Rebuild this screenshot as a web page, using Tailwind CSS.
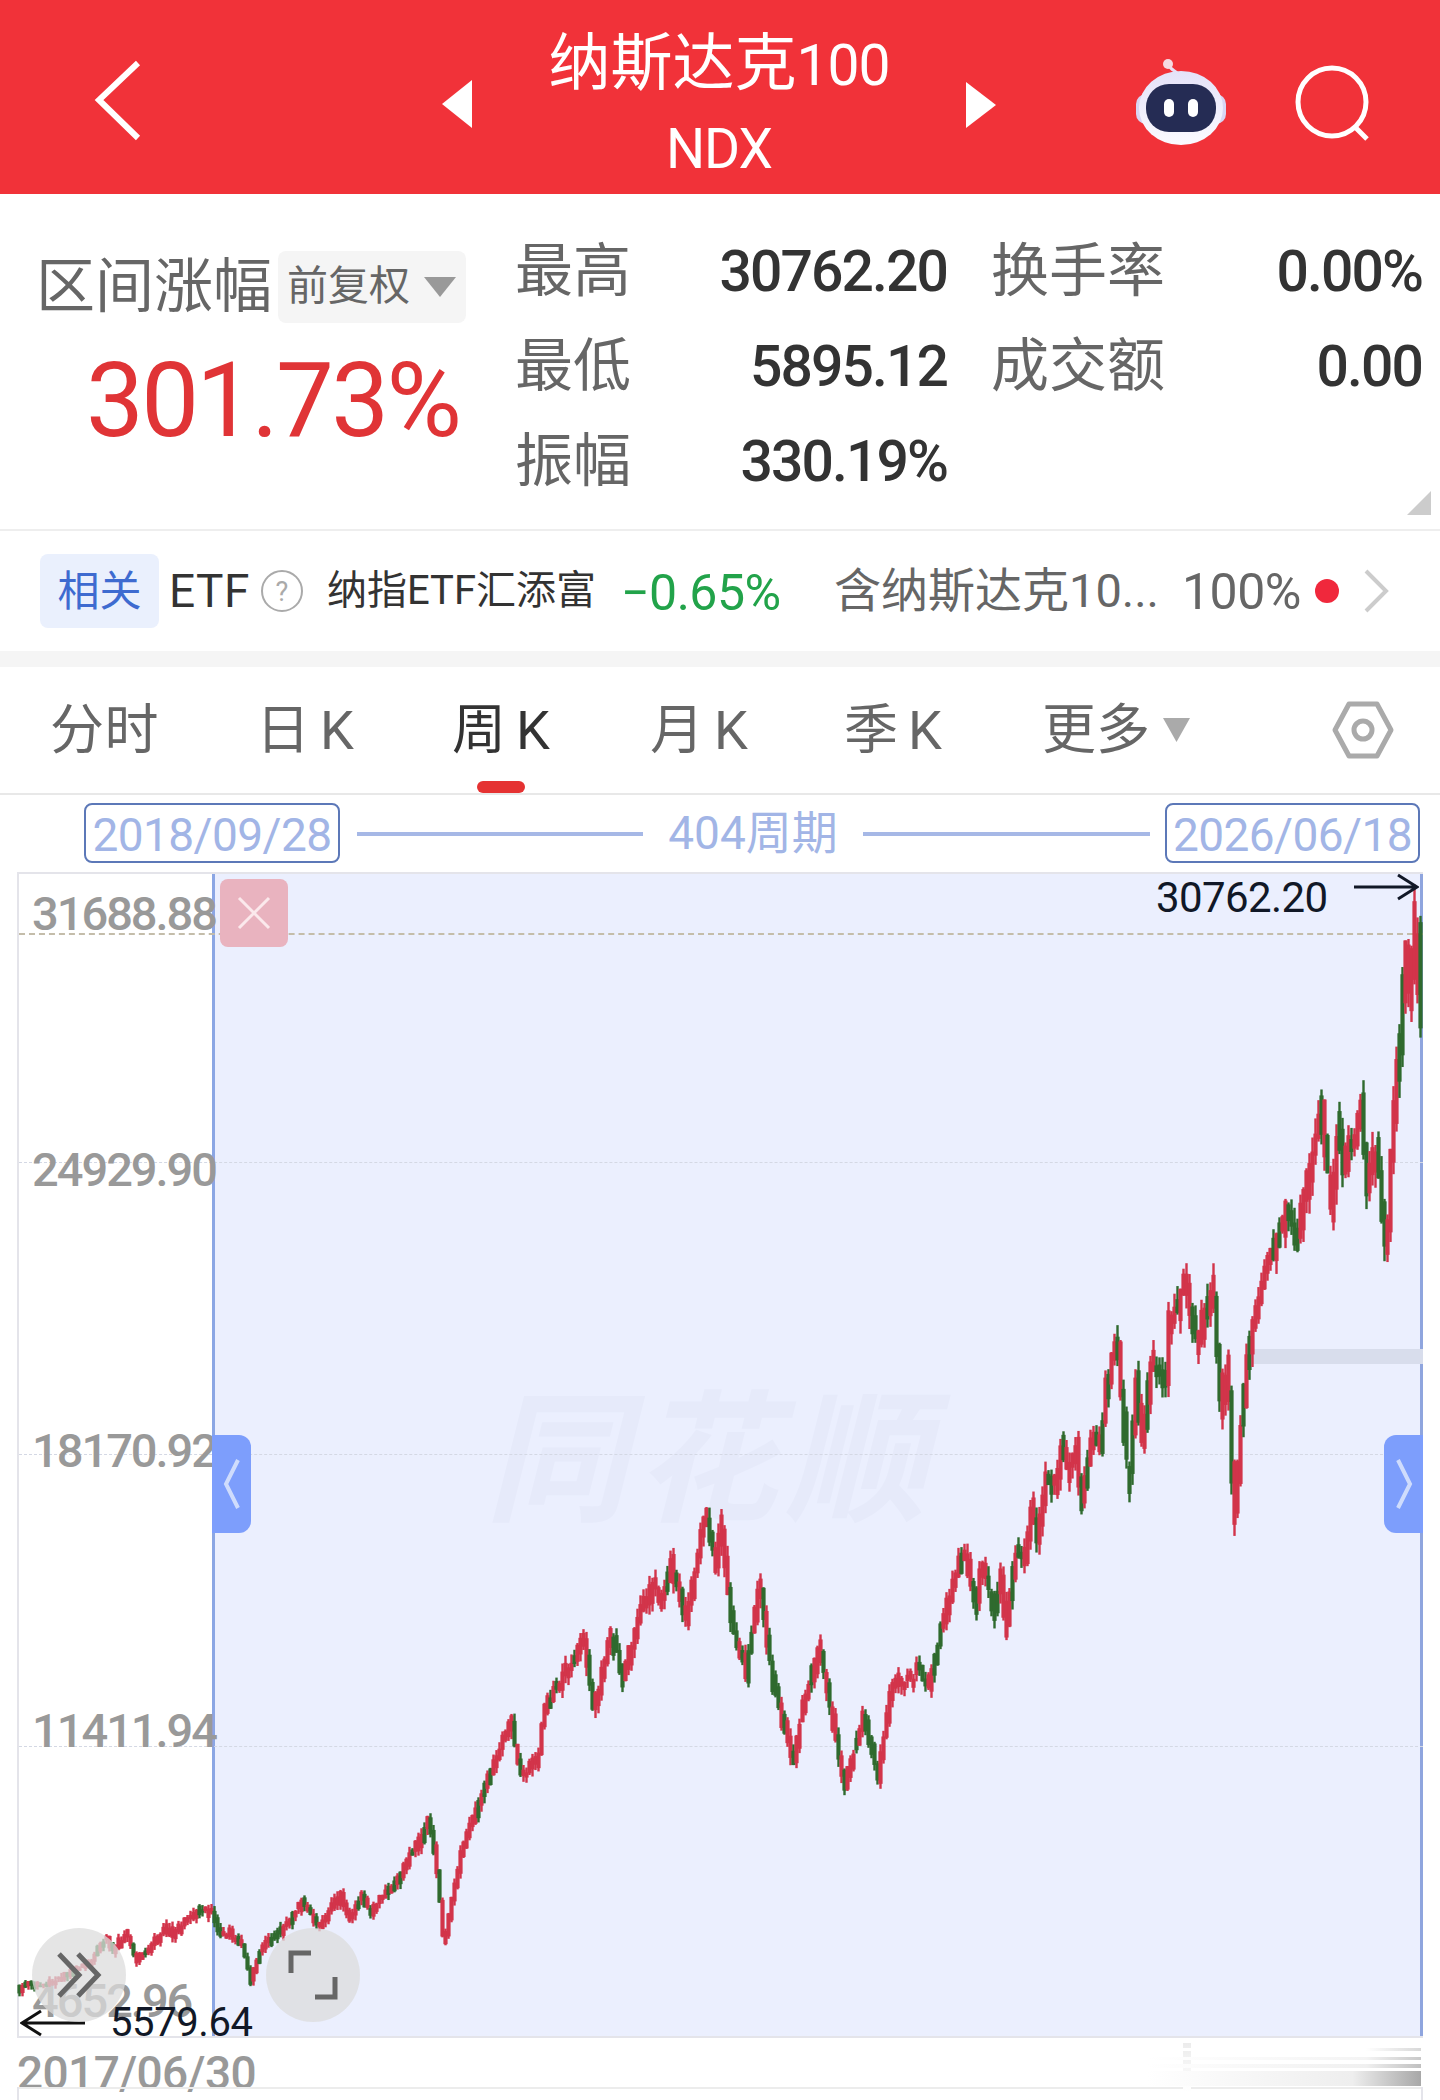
<!DOCTYPE html>
<html lang="zh-CN">
<head>
    <meta charset="UTF-8">
    <meta name="viewport" content="width=device-width, initial-scale=1.0">
    <title>纳斯达克100 区间统计</title>
    <script src="https://cdn.jsdelivr.net/npm/@tailwindcss/browser@4"></script>
</head>
<body class="w-[1440px] h-[2100px] overflow-hidden bg-white font-['Roboto','Noto_Sans_CJK_SC',sans-serif]">

    <!-- header -->
    <header class="h-[194px] bg-[#f13239] flex text-white">
        <svg class="ml-[94px] mt-[58px] w-[50px] h-[84px]" viewBox="0 0 50 84" fill="none"><path d="M44 5 L5 42 L44 80" stroke="#fff" stroke-width="6"/></svg>
        <svg class="ml-[298px] mt-[80px] w-[30px] h-[48px]" viewBox="0 0 30 48"><path d="M30 0 V48 L0 24 Z" fill="#fff"/></svg>
        <div class="w-[494px] flex flex-col items-center">
            <div class="mt-[26px] h-[76px] leading-[76px] text-[62px]">纳斯达克<span class="text-[57px] tracking-[-1px]">100</span></div>
            <div class="mt-[17px] h-[60px] leading-[60px] text-[55px] tracking-[-1px]">NDX</div>
        </div>
        <svg class="mt-[82px] w-[30px] h-[46px]" viewBox="0 0 30 46"><path d="M0 0 V46 L30 23 Z" fill="#fff"/></svg>
        <svg class="ml-[139px] mt-[58px] w-[92px] h-[88px]" viewBox="0 0 92 88">
            <defs>
                <linearGradient id="helmet" x1="0" y1="0" x2="0" y2="1">
                    <stop offset="0" stop-color="#e4e2f8"/>
                    <stop offset="1" stop-color="#fbfaff"/>
                </linearGradient>
            </defs>
            <path d="M44 20 C44 12 36 14 34 7" stroke="#e8dff5" stroke-width="3" fill="none"/>
            <circle cx="33" cy="6" r="5" fill="#f6d9e2"/>
            <rect x="1" y="36" width="90" height="30" rx="10" fill="#d8d5f3"/>
            <ellipse cx="46" cy="50" rx="42" ry="37" fill="url(#helmet)"/>
            <rect x="11" y="26" width="70" height="48" rx="23" fill="#252c54"/>
            <rect x="29" y="41" width="10" height="18" rx="5" fill="#fff"/>
            <rect x="53" y="41" width="10" height="18" rx="5" fill="#fff"/>
        </svg>
        <svg class="ml-[68px] mt-[62px] w-[78px] h-[80px]" viewBox="0 0 78 80" fill="none">
            <circle cx="37" cy="40" r="34" stroke="#fff" stroke-width="5"/>
            <path d="M61 66 L72 77" stroke="#fff" stroke-width="5"/>
        </svg>
    </header>

    <!-- range stats -->
    <section class="relative h-[337px] border-b-2 border-[#eeeeee] flex">
        <div class="w-[515px] pl-[36px]">
            <div class="flex mt-[57px] items-center h-[72px]">
                <span class="w-[242px] text-[59px] leading-[72px] text-[#666666] whitespace-nowrap">区间涨幅</span>
                <span class="w-[188px] h-[72px] rounded-lg bg-[#f5f5f5] flex items-center pl-[9px] gap-[14px] text-[41px] text-[#666666]">
                    前复权
                    <svg class="w-[32px] h-[20px]" viewBox="0 0 32 20"><path d="M0 0 H32 L16 20 Z" fill="#999"/></svg>
                </span>
            </div>
            <div class="mt-[19px] ml-[50px] text-[#e03436] text-[103px] leading-[118px] tracking-[-2.7px]">301.73%</div>
        </div>
        <div class="pt-[30px] flex flex-col text-[58px]">
            <div class="h-[95px] flex items-center">
                <span class="w-[117px] text-[#666666] whitespace-nowrap">最高</span>
                <span class="w-[315px] text-right text-[57px] text-[#333333] tracking-[-1.9px] font-medium">30762.20</span>
                <span class="ml-[44px] w-[176px] text-[#666666] whitespace-nowrap">换手率</span>
                <span class="w-[255px] text-right text-[57px] text-[#333333] tracking-[-1.9px] font-medium">0.00%</span>
            </div>
            <div class="h-[95px] flex items-center">
                <span class="w-[117px] text-[#666666] whitespace-nowrap">最低</span>
                <span class="w-[315px] text-right text-[57px] text-[#333333] tracking-[-1.9px] font-medium">5895.12</span>
                <span class="ml-[44px] w-[176px] text-[#666666] whitespace-nowrap">成交额</span>
                <span class="w-[255px] text-right text-[57px] text-[#333333] tracking-[-1.9px] font-medium">0.00</span>
            </div>
            <div class="h-[95px] flex items-center">
                <span class="w-[117px] text-[#666666] whitespace-nowrap">振幅</span>
                <span class="w-[315px] text-right text-[57px] text-[#333333] tracking-[-1.9px] font-medium">330.19%</span>
            </div>
        </div>
        <svg class="absolute left-[1407px] top-[297px] w-[24px] h-[24px]" viewBox="0 0 24 24"><path d="M24 0 V24 H0 Z" fill="#cccccc"/></svg>
    </section>

    <!-- related etf -->
    <section class="h-[120px] flex items-center text-[46px]">
        <span class="ml-[40px] w-[119px] h-[74px] rounded-lg bg-[#eaf0fd] text-[#3e6bd0] text-[42px] flex items-center justify-center">相关</span>
        <span class="ml-[10px] text-[#333333] w-[91px] tracking-[0.5px]">ETF</span>
        <svg class="w-[44px] h-[44px]" viewBox="0 0 44 44" fill="none">
            <circle cx="22" cy="22" r="20" stroke="#aaaaaa" stroke-width="2"/>
            <text x="22" y="32" text-anchor="middle" font-size="27" fill="#aaaaaa">?</text>
        </svg>
        <span class="ml-[23px] w-[294px] text-[40px] text-[#333333] whitespace-nowrap">纳指ETF汇添富</span>
        <span class="w-[213px] pt-[4px] text-[50px] text-[#22a34a] tracking-[-0.5px]">−0.65%</span>
        <span class="w-[348px] text-[47px] text-[#666666] whitespace-nowrap">含纳斯达克10...</span>
        <span class="w-[118px] pt-[2px] text-[50px] text-[#666666] tracking-[-0.5px]">100%</span>
        <span class="ml-[15px] w-[24px] h-[24px] rounded-full bg-[#f0283c]"></span>
        <svg class="ml-[23px] w-[28px] h-[46px]" viewBox="0 0 28 46" fill="none"><path d="M4 3 L24 23 L4 43" stroke="#cccccc" stroke-width="4"/></svg>
    </section>
    <div class="h-[16px] bg-[#f5f5f5]"></div>

    <!-- period tabs -->
    <nav class="relative h-[128px] border-b-2 border-[#e8e8e8] flex items-center text-[54px] text-[#666666]">
        <span class="ml-[50px] w-[206px] tracking-[0.5px]">分时</span>
        <span class="w-[196px] flex gap-[10px]">日<span>K</span></span>
        <span class="w-[198px] flex gap-[10px] text-[#333333]">周<span>K</span></span>
        <span class="w-[194px] flex gap-[10px]">月<span>K</span></span>
        <span class="w-[198px] flex gap-[10px]">季<span>K</span></span>
        <span class="w-[121px]">更多</span>
        <svg class="w-[27px] h-[24px]" viewBox="0 0 27 24"><path d="M0 0 H27 L13.5 24 Z" fill="#aaaaaa"/></svg>
        <svg class="ml-[142px] w-[62px] h-[62px]" viewBox="0 0 62 62" fill="none">
            <path d="M17 5 H45 L59 31 L45 57 H17 L3 31 Z" stroke="#aaaaaa" stroke-width="5" stroke-linejoin="round"/>
            <circle cx="31" cy="31" r="9" stroke="#aaaaaa" stroke-width="5"/>
        </svg>
        <span class="absolute left-[477px] bottom-0 w-[48px] h-[12px] rounded-full bg-[#e53232]"></span>
    </nav>

    <!-- date range -->
    <div class="h-[77px] pt-[8px] flex text-[46px] text-[#a2b5e6] leading-[60px]">
        <span class="ml-[84px] w-[256px] h-[60px] border-2 border-[#5c78b8] rounded-lg text-center tracking-[-0.6px]">2018/09/28</span>
        <span class="ml-[17px] mt-[29px] w-[286px] h-[4px] bg-[#a6b8e6]"></span>
        <span class="w-[220px] text-center">404周期</span>
        <span class="mt-[29px] w-[287px] h-[4px] bg-[#a6b8e6]"></span>
        <span class="ml-[15px] w-[255px] h-[60px] border-2 border-[#5c78b8] rounded-lg text-center tracking-[-0.6px]">2026/06/18</span>
    </div>

    <!-- chart canvas -->
    <div id="chart" class="relative ml-[17px] w-[1406px] h-[1166px] border-l-2 border-t-2 border-b-2 border-[#e4e4ea] text-[#999999] text-[47px] font-medium tracking-[-2px]">
        <div class="absolute left-[193px] top-0 w-[1211px] h-full bg-[#ebeffe] border-l-[3px] border-r-[3px] border-l-[#8ba6e4] border-r-[#8fa5de]"></div>
        <div class="absolute left-[466px] top-[508px] text-[142px] leading-[160px] font-bold italic text-[#e6eafa] tracking-[8px]">同花顺</div>
        <div class="absolute left-0 top-[59px] w-[1404px] border-t-2 border-dashed border-[#c4bdaa]"></div>
        <div class="absolute left-0 top-[288px] w-[1404px] border-t border-dashed border-[#d4d8e4]"></div>
        <div class="absolute left-0 top-[580px] w-[1404px] border-t border-dashed border-[#d4d8e4]"></div>
        <div class="absolute left-0 top-[872px] w-[1404px] border-t border-dashed border-[#d4d8e4]"></div>
        <div class="absolute left-[1233px] top-[475px] w-[171px] h-[15px] bg-[#d8ddec]"></div>
        <span class="absolute left-[13px] top-[5px]">31688.88</span>
        <span class="absolute left-[13px] top-[261px]">24929.90</span>
        <span class="absolute left-[13px] top-[542px]">18170.92</span>
        <span class="absolute left-[13px] top-[822px]">11411.94</span>
        <span class="absolute left-[13px] top-[1092px]">4652.96</span>
        <svg id="candles" class="absolute left-[-2px] top-[-2px] w-[1406px] h-[1166px]" viewBox="17 872 1406 1166"></svg>
        <div class="absolute left-[201px] top-[5px] w-[68px] h-[68px] rounded-lg bg-[#e9b3bf] flex items-center justify-center">
            <svg class="w-[36px] h-[36px]" viewBox="0 0 36 36" fill="none"><path d="M3 3 L33 33 M33 3 L3 33" stroke="#fbe9ec" stroke-width="3"/></svg>
        </div>
        <div class="absolute left-[193px] top-[561px] w-[39px] h-[98px] rounded-r-xl bg-[#7d9efc] flex items-center justify-center">
            <svg class="w-[20px] h-[52px]" viewBox="0 0 20 52" fill="none"><path d="M16 2 L4 26 L16 50" stroke="#cfdcfc" stroke-width="4"/></svg>
        </div>
        <div class="absolute left-[1365px] top-[561px] w-[39px] h-[98px] rounded-l-xl bg-[#7d9efc] flex items-center justify-center">
            <svg class="w-[20px] h-[52px]" viewBox="0 0 20 52" fill="none"><path d="M4 2 L16 26 L4 50" stroke="#cfdcfc" stroke-width="4"/></svg>
        </div>
        <span class="absolute left-[1137px] top-[-8px] text-[42px] font-normal text-[#111827] tracking-[-0.6px]">30762.20</span>
        <svg class="absolute left-[1334px] top-[-2px] w-[66px] h-[32px]" viewBox="0 0 66 32" fill="none"><path d="M1 15 H64 M45 3 L64 15 L45 27" stroke="#111827" stroke-width="3"/></svg>
        <span class="absolute left-[91px] top-[1119px] text-[40px] font-normal text-[#111827] tracking-[-0.4px]">5579.64</span>
        <svg class="absolute left-[1px] top-[1133px] w-[66px] h-[32px]" viewBox="0 0 66 32" fill="none"><path d="M65 16 H2 M21 4 L2 16 L21 28" stroke="#111" stroke-width="3"/></svg>
        <div class="absolute left-[13px] top-[1054px] w-[94px] h-[94px] rounded-full bg-[#dcdcdc]/75 flex items-center justify-center">
            <svg class="w-[50px] h-[50px]" viewBox="0 0 50 50" fill="none"><path d="M5 4 L25 25 L5 46 M24 4 L44 25 L24 46" stroke="#666" stroke-width="5"/></svg>
        </div>
        <div class="absolute left-[247px] top-[1054px] w-[94px] h-[94px] rounded-full bg-[#dcdcdc]/75 flex items-center justify-center">
            <svg class="w-[50px] h-[50px]" viewBox="0 0 50 50" fill="none"><path d="M3 23 V3 H23 M47 27 V47 H27" stroke="#666" stroke-width="5"/></svg>
        </div>
    </div>

    <!-- bottom axis -->
    <div class="relative h-[63px] ml-[17px] w-[1406px]">
        <span class="absolute left-0 top-[8px] text-[46px] leading-[54px] font-medium text-[#999999] tracking-[-0.6px]">2017/06/30</span>
        <div class="absolute left-0 top-[49px] w-[1406px] h-[2px] bg-[#ececec]"></div>
        <div class="absolute left-0 top-[49px] w-[2px] h-[14px] bg-[#e4e4ea]"></div>
        <div class="absolute left-[1404px] top-[49px] w-[2px] h-[14px] bg-[#e4e4ea]"></div>
        <div class="absolute left-[1166px] top-[5px] w-[8px] h-[48px] bg-linear-to-b from-[#ececec] to-white"></div>
        <div class="absolute left-[1130px] top-[10px] w-[274px] h-[3px] bg-linear-to-r from-white via-white via-80% to-[#d8d8d8]"></div>
        <div class="absolute left-[1130px] top-[19px] w-[274px] h-[3px] bg-linear-to-r from-white via-[#f4f4f4] via-80% to-[#c8c8c8]"></div>
        <div class="absolute left-[1130px] top-[26px] w-[274px] h-[4px] bg-linear-to-r from-white via-[#f0f0f0] via-80% to-[#c0c0c0]"></div>
        <div class="absolute left-[1130px] top-[33px] w-[274px] h-[15px] bg-linear-to-r from-white via-[#eeeeee] via-75% to-[#a8a8a8]"></div>
    </div>

    <script>
        // price path as [x, y] turning points, read off the chart in page pixels
        const path = [[17,1992],[30,1983],[43,1985],[67,1977],[93,1960],[107,1937],[115,1950],[127,1933],[137,1960],[147,1953],[167,1927],[173,1933],[200,1910],[213,1913],[220,1933],[230,1933],[243,1947],[252,1980],[263,1947],[283,1930],[303,1902],[320,1927],[340,1895],[350,1917],[363,1897],[372,1912],[400,1877],[430,1822],[437,1863],[445,1943],[463,1847],[488,1783],[512,1720],[521,1773],[539,1763],[544,1713],[584,1640],[595,1710],[606,1663],[611,1632],[624,1677],[646,1600],[655,1585],[664,1600],[671,1562],[687,1617],[707,1517],[718,1567],[722,1522],[731,1613],[747,1673],[761,1580],[774,1683],[794,1760],[803,1713],[809,1693],[820,1647],[834,1720],[845,1787],[865,1717],[879,1777],[893,1683],[913,1683],[917,1668],[930,1687],[940,1640],[948,1608],[965,1552],[977,1608],[983,1565],[997,1613],[1002,1577],[1007,1630],[1017,1553],[1025,1560],[1033,1507],[1038,1535],[1048,1477],[1058,1490],[1064,1443],[1070,1470],[1077,1445],[1082,1505],[1093,1433],[1102,1452],[1107,1390],[1115,1357],[1118,1347],[1130,1485],[1137,1380],[1143,1443],[1152,1363],[1167,1378],[1170,1325],[1187,1283],[1198,1350],[1213,1280],[1219,1357],[1223,1410],[1229,1363],[1235,1523],[1247,1365],[1250,1343],[1268,1264],[1283,1221],[1288,1205],[1298,1246],[1313,1152],[1322,1109],[1332,1207],[1340,1123],[1343,1171],[1362,1111],[1367,1182],[1378,1152],[1385,1239],[1388,1250],[1392,1150],[1397,1086],[1402,1039],[1403,1000],[1408,945],[1411,1000],[1415,913],[1417,985],[1420,935],[1421,1020]];

        function priceAt(x) {
            for (let i = 1; i < path.length; i++) {
                if (x <= path[i][0]) {
                    const a = path[i - 1], b = path[i];
                    return a[1] + (b[1] - a[1]) * (x - a[0]) / (b[0] - a[0]);
                }
            }
            return path[path.length - 1][1];
        }

        let seed = 17;
        function rnd() {
            seed = (seed * 16807) % 2147483647;
            return seed / 2147483647;
        }

        let marks = '';
        for (let x = 18; x < 1421; x += 3) {
            const open = priceAt(x), close = priceAt(x + 3);
            // turning points inside this step must not be skipped, or the spikes vanish
            const inside = path.filter(p => p[0] >= x && p[0] < x + 3).map(p => p[1]);
            const falling = close > open;
            const green = falling ? rnd() < 0.6 : rnd() < 0.16;
            // scatter grows with price, the early years are tight
            const spread = 4 + 14 * (1992 - open) / 1000;
            const shift = (rnd() - 0.5) * spread;
            const top = Math.min(open + shift, close + shift, ...inside) - rnd() * spread;
            const bottom = Math.max(open + shift, close + shift, ...inside) + rnd() * spread;
            const wickTop = top - rnd() * spread, wickBottom = bottom + rnd() * spread;
            const color = green ? '#2f6a2e' : '#d2344a';
            marks += `<rect x="${x + 0.3}" y="${wickTop}" width="2.4" height="${wickBottom - wickTop}" fill="${color}"/>`;
            marks += `<rect x="${x - 0.6}" y="${top}" width="4.2" height="${bottom - top}" fill="${color}"/>`;
        }
        document.getElementById('candles').innerHTML = marks;
    </script>
</body>
</html>
